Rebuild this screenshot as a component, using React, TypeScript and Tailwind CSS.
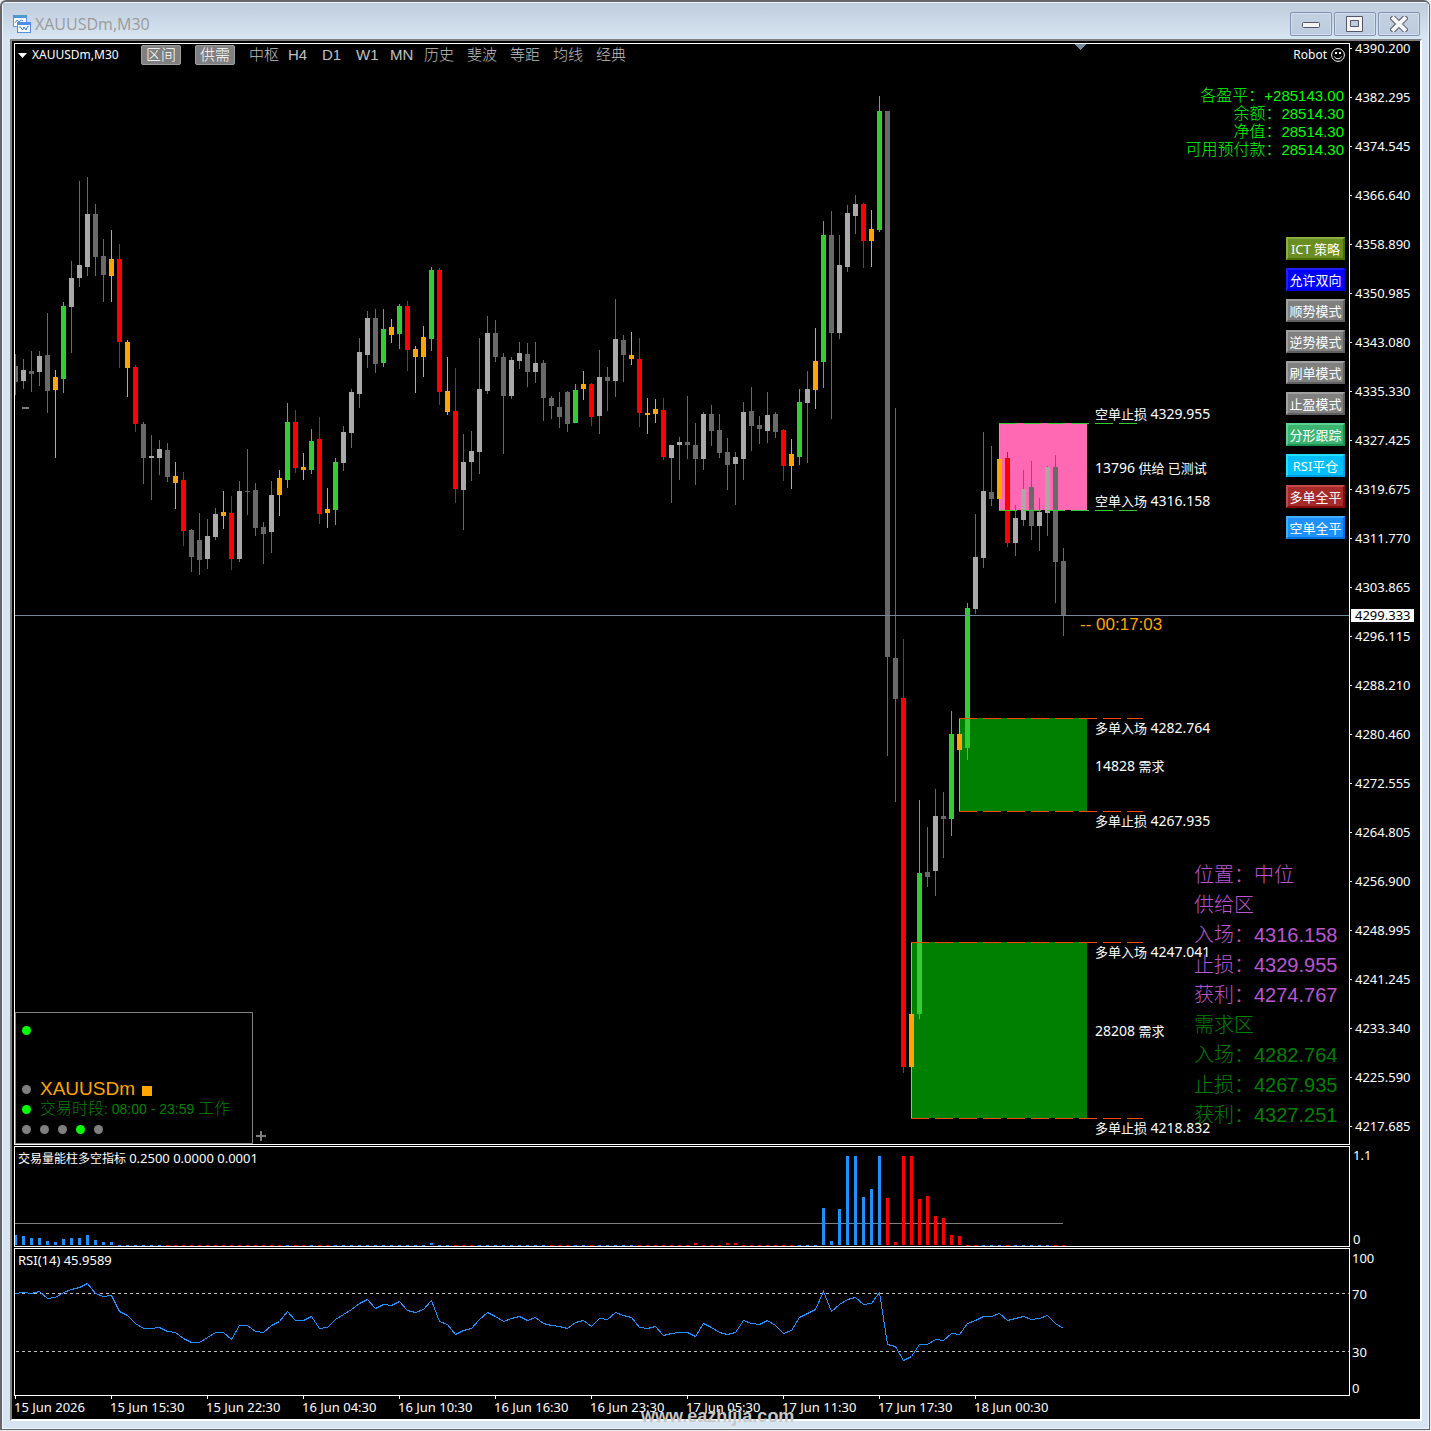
import React from 'react';
import { clsx } from 'clsx';

type Kind = 'up' | 'down' | 'bull' | 'bear' | 'turn';
// kind, high, body top, body bottom, low
type Candle = [Kind, number, number, number, number];

const COLORS: Record<Kind, string> = {
  up: '#a9a9a9',
  down: '#696969',
  bull: '#32cd32',
  bear: '#ff0000',
  turn: '#ffa500',
};

const BLUE = '#1e90ff';
const STEP = 8;
const LEFT = 15;
const barX = (i: number) => LEFT + i * STEP;

const candles: Candle[] = [
  ['down', 354, 366, 382, 395], ['up', 359, 370, 381, 389], ['down', 351, 371, 374, 392], ['up', 351, 356, 372, 386],
  ['down', 313, 355, 391, 413], ['turn', 370, 377, 390, 458], ['bull', 302, 306, 379, 393], ['up', 261, 278, 307, 353],
  ['up', 181, 265, 278, 287], ['up', 177, 214, 267, 276], ['down', 204, 214, 257, 276], ['down', 239, 256, 275, 302],
  ['turn', 230, 259, 276, 302], ['bear', 244, 259, 342, 368], ['turn', 340, 342, 368, 397], ['bear', 365, 367, 424, 432],
  ['down', 422, 424, 458, 484], ['up', 435, 456, 458, 500], ['up', 440, 449, 458, 475], ['down', 443, 450, 477, 482],
  ['turn', 462, 476, 483, 509], ['bear', 472, 480, 531, 546], ['down', 529, 530, 557, 572], ['down', 513, 540, 560, 575],
  ['up', 519, 536, 559, 569], ['up', 508, 514, 537, 540], ['turn', 491, 512, 516, 529], ['bear', 496, 513, 559, 570],
  ['up', 481, 491, 559, 562], ['down', 449, 491, 492, 515], ['down', 483, 490, 528, 536], ['down', 522, 527, 534, 564],
  ['up', 481, 495, 532, 553], ['turn', 470, 478, 495, 516], ['bull', 403, 422, 480, 488], ['bear', 410, 422, 468, 473],
  ['turn', 453, 467, 470, 480], ['bull', 429, 441, 470, 474], ['bear', 417, 439, 514, 524], ['turn', 488, 509, 513, 528],
  ['bull', 458, 462, 510, 525], ['up', 426, 432, 463, 471], ['up', 389, 392, 433, 448], ['up', 338, 352, 394, 408],
  ['up', 311, 318, 355, 368], ['down', 309, 318, 364, 373], ['bull', 309, 329, 363, 367], ['turn', 319, 327, 335, 343],
  ['bull', 304, 306, 334, 349], ['bear', 301, 306, 350, 371], ['turn', 346, 349, 357, 393], ['turn', 326, 337, 357, 377],
  ['bull', 267, 270, 339, 351], ['bear', 268, 270, 392, 405], ['turn', 357, 391, 412, 415], ['bear', 368, 411, 489, 503],
  ['up', 434, 462, 490, 530], ['up', 431, 451, 462, 481], ['up', 338, 389, 452, 474], ['up', 316, 333, 391, 394],
  ['down', 320, 333, 357, 362], ['down', 353, 357, 396, 454], ['up', 357, 360, 396, 399], ['up', 342, 353, 361, 369],
  ['down', 343, 354, 372, 387], ['up', 342, 363, 372, 383], ['down', 360, 363, 398, 421], ['down', 396, 398, 406, 419],
  ['down', 392, 407, 417, 428], ['down', 391, 392, 424, 432], ['bull', 384, 390, 423, 423], ['turn', 371, 384, 389, 400],
  ['bear', 383, 384, 417, 426], ['up', 350, 377, 416, 434], ['down', 367, 377, 381, 411], ['up', 299, 339, 381, 397],
  ['down', 335, 340, 355, 382], ['turn', 332, 355, 359, 365], ['bear', 338, 359, 413, 427], ['turn', 398, 413, 415, 434],
  ['turn', 399, 409, 414, 423], ['bear', 398, 410, 457, 460], ['up', 445, 445, 458, 503], ['up', 437, 442, 445, 480],
  ['down', 396, 442, 445, 459], ['down', 423, 445, 459, 485], ['up', 412, 414, 459, 470], ['down', 405, 414, 431, 446],
  ['down', 414, 430, 453, 458], ['down', 438, 452, 465, 490], ['up', 452, 457, 464, 505], ['up', 402, 412, 459, 480],
  ['down', 387, 411, 426, 451], ['down', 416, 425, 429, 444], ['up', 392, 415, 431, 443], ['down', 412, 414, 432, 438],
  ['bear', 429, 430, 466, 481], ['turn', 439, 454, 466, 489], ['bull', 389, 402, 457, 465], ['up', 371, 389, 403, 463],
  ['turn', 328, 361, 390, 409], ['bull', 221, 235, 362, 388], ['down', 211, 235, 333, 419], ['up', 235, 265, 333, 339],
  ['up', 205, 213, 267, 272], ['up', 195, 204, 216, 234], ['bear', 203, 204, 241, 268], ['turn', 210, 229, 241, 267],
  ['bull', 96, 111, 230, 232], ['down', 111, 111, 657, 756], ['down', 408, 658, 699, 802], ['bear', 639, 698, 1067, 1073],
  ['turn', 942, 1014, 1067, 1118], ['bull', 800, 873, 1014, 1019], ['down', 827, 872, 877, 887], ['up', 789, 816, 871, 896],
  ['down', 792, 816, 819, 858], ['bull', 711, 734, 819, 836], ['turn', 718, 734, 750, 811], ['bull', 603, 608, 748, 760],
  ['up', 514, 557, 609, 614], ['up', 432, 491, 558, 568], ['down', 446, 492, 499, 506], ['turn', 423, 459, 499, 510],
  ['bear', 452, 458, 543, 547], ['up', 505, 518, 543, 556], ['up', 470, 489, 520, 526], ['down', 461, 487, 526, 540],
  ['up', 498, 512, 526, 551], ['up', 466, 467, 513, 536], ['down', 455, 467, 562, 603], ['down', 548, 561, 616, 636],
];

const rsi = [
  1293, 1292, 1293, 1291, 1298, 1297, 1292, 1289, 1287, 1283, 1293, 1296, 1295, 1311, 1315, 1323, 1328, 1328, 1327, 1331,
  1332, 1338, 1342, 1342, 1337, 1332, 1332, 1339, 1325, 1325, 1331, 1332, 1325, 1321, 1311, 1320, 1320, 1316, 1328, 1327,
  1319, 1314, 1309, 1303, 1299, 1308, 1304, 1305, 1301, 1310, 1312, 1309, 1300, 1321, 1324, 1334, 1330, 1328, 1319, 1312,
  1316, 1321, 1318, 1316, 1320, 1317, 1323, 1325, 1326, 1328, 1322, 1320, 1326, 1318, 1319, 1312, 1315, 1317, 1327, 1328,
  1326, 1335, 1333, 1332, 1332, 1336, 1323, 1327, 1332, 1334, 1332, 1320, 1323, 1324, 1320, 1325, 1333, 1330, 1317, 1313,
  1309, 1291, 1311, 1304, 1299, 1297, 1304, 1303, 1292, 1344, 1346, 1360, 1356, 1344, 1344, 1339, 1340, 1333, 1334, 1323,
  1320, 1316, 1316, 1313, 1320, 1318, 1316, 1319, 1318, 1315, 1323, 1328,
];

// one letter per bar: b = blue, r = red
const volumeSides =
  'b'.repeat(19) + 'r'.repeat(15) + 'brrbrr' + 'b'.repeat(15) + 'rrr' + 'b'.repeat(9) + 'rrr' + 'bbr' +
  'b'.repeat(5) + 'r'.repeat(20) + 'b'.repeat(11) + 'r'.repeat(12) + 'bbbr' + 'b'.repeat(5) + 'rr';

// heights of the bars that rise above the base line
const volumeHeights: Record<number, number> = {
  0: 10, 1: 9, 2: 7, 3: 7, 4: 4, 5: 3, 6: 6, 7: 7, 8: 7, 9: 10, 10: 5, 11: 3, 12: 3, 52: 2,
  85: 2, 89: 2, 90: 2, 101: 37, 102: 4, 103: 36, 104: 89, 105: 89, 106: 48, 107: 56, 108: 89,
  109: 47, 110: 3, 111: 89, 112: 89, 113: 46, 114: 49, 115: 29, 116: 27, 117: 10, 118: 9,
};

const zones = [
  { x: 999, top: 423, bottom: 510, end: 1137, fill: '#ff69b4', line: '#32cd32' },
  { x: 959, top: 718, bottom: 811, end: 1143, fill: '#008000', line: '#ff4500' },
  { x: 911, top: 942, bottom: 1118, end: 1143, fill: '#008000', line: '#ff4500' },
];

const zoneLabels = [
  { y: 414, text: '空单止损 4329.955' },
  { y: 468, text: '13796 供给 已测试' },
  { y: 501, text: '空单入场 4316.158' },
  { y: 728, text: '多单入场 4282.764' },
  { y: 766, text: '14828 需求' },
  { y: 821, text: '多单止损 4267.935' },
  { y: 952, text: '多单入场 4247.041' },
  { y: 1031, text: '28208 需求' },
  { y: 1128, text: '多单止损 4218.832' },
];

const prices = [
  '4390.200', '4382.295', '4374.545', '4366.640', '4358.890', '4350.985', '4343.080', '4335.330',
  '4327.425', '4319.675', '4311.770', '4303.865', '4296.115', '4288.210', '4280.460', '4272.555',
  '4264.805', '4256.900', '4248.995', '4241.245', '4233.340', '4225.590', '4217.685',
];

const times = [
  '15 Jun 2026', '15 Jun 15:30', '15 Jun 22:30', '16 Jun 04:30', '16 Jun 10:30', '16 Jun 16:30',
  '16 Jun 23:30', '17 Jun 05:30', '17 Jun 11:30', '17 Jun 17:30', '18 Jun 00:30',
];

const tabs = [
  { label: '中枢', width: 'w-[39px]' },
  { label: 'H4', width: 'w-[34px]' },
  { label: 'D1', width: 'w-[34px]' },
  { label: 'W1', width: 'w-[34px]' },
  { label: 'MN', width: 'w-[34px]' },
  { label: '历史', width: 'w-[43px]' },
  { label: '斐波', width: 'w-[43px]' },
  { label: '等距', width: 'w-[43px]' },
  { label: '均线', width: 'w-[43px]' },
  { label: '经典', width: 'w-[43px]' },
];

const account = [
  ['各盈平：', '+285143.00'],
  ['余额：', '28514.30'],
  ['净值：', '28514.30'],
  ['可用预付款：', '28514.30'],
];

const grayKey = 'bg-[#808080] border-t-[#a0a0a0] border-l-[#a0a0a0] border-b-[#606060] border-r-[#606060]';
const actions = [
  { label: 'ICT 策略', look: 'bg-[#6b8e23] border-t-[#8bae43] border-l-[#8bae43] border-b-[#4b6e03] border-r-[#4b6e03]' },
  { label: '允许双向', look: 'bg-[#0000ff] border-t-[#2020ff] border-l-[#2020ff] border-b-[#0000df] border-r-[#0000df]' },
  { label: '顺势模式', look: grayKey },
  { label: '逆势模式', look: grayKey },
  { label: '刷单模式', look: grayKey },
  { label: '止盈模式', look: grayKey },
  { label: '分形跟踪', look: 'bg-[#3cb371] border-t-[#5cd391] border-l-[#5cd391] border-b-[#1c9351] border-r-[#1c9351]' },
  { label: 'RSI平仓', look: 'bg-[#00bfff] border-t-[#20dfff] border-l-[#20dfff] border-b-[#009fdf] border-r-[#009fdf]' },
  { label: '多单全平', look: 'bg-[#a52a2a] border-t-[#c54a4a] border-l-[#c54a4a] border-b-[#850a0a] border-r-[#850a0a]' },
  { label: '空单全平', look: 'bg-[#1e90ff] border-t-[#3eb0ff] border-l-[#3eb0ff] border-b-[#0070df] border-r-[#0070df]' },
];

const signals = [
  { name: '位置：', value: '中位', color: 'text-[#ba55d3]' },
  { name: '供给区', value: '', color: 'text-[#ba55d3]' },
  { name: '入场：', value: '4316.158', color: 'text-[#ba55d3]' },
  { name: '止损：', value: '4329.955', color: 'text-[#ba55d3]' },
  { name: '获利：', value: '4274.767', color: 'text-[#ba55d3]' },
  { name: '需求区', value: '', color: 'text-[#008000]' },
  { name: '入场：', value: '4282.764', color: 'text-[#008000]' },
  { name: '止损：', value: '4267.935', color: 'text-[#008000]' },
  { name: '获利：', value: '4327.251', color: 'text-[#008000]' },
];

const arial = "[font-family:'Liberation_Sans','Noto_Sans_CJK_SC',sans-serif]";
const tahoma = "[font-family:'Noto_Sans','Noto_Sans_CJK_SC',sans-serif]";

const ChartIcon = () => (
  <svg width="18" height="18" viewBox="0 0 18 18" aria-hidden="true">
    <rect x="0.5" y="0.5" width="13" height="11" fill="#fff" stroke="#5b97ea" />
    <rect x="0" y="0" width="14" height="3" fill="#4f8fe8" />
    <path d="M3 1h2M7 1h1M11 1h1" stroke="#3ec46d" />
    <path d="M2 8l2-3 2 2 2-2 2 1" fill="none" stroke="#4f8fe8" />
    <rect x="4.5" y="7.5" width="13" height="10" fill="#fff" stroke="#4f8fe8" />
    <rect x="4" y="7" width="14" height="3" fill="#4f8fe8" />
    <path d="M6 12l1.500 0 2 3 1.500-3 2 3 1.500-3.500 1 0" fill="none" stroke="#2f74d8" />
  </svg>
);

const CaptionButton = ({ label, children }: { label: string; children: React.ReactNode }) => (
  <button
    aria-label={label}
    className="flex h-6 w-[42px] items-center justify-center rounded-xs border border-[#8292b0] bg-linear-to-b from-[#c3d1e2] to-[#bccbde] shadow-[inset_0_0_0_1px_#d3dfec]"
  >
    <svg width="18" height="16" viewBox="0 0 18 16" aria-hidden="true">
      {children}
    </svg>
  </button>
);

const TitleBar = () => (
  <header className="flex h-9 items-center justify-between bg-linear-to-b from-[#bfccdb] to-[#d8e5f3] pr-2 pl-[10px]">
    <div className="flex items-center gap-1 pt-1.5">
      <ChartIcon />
      <h1 className="[font-family:'Open_Sans',sans-serif] text-base leading-5 text-[#9b9b9b]">XAUUSDm,M30</h1>
    </div>
    <div className="flex gap-0.5 pt-1.5">
      <CaptionButton label="Minimize">
        <rect x="0.5" y="6.500" width="17" height="5" rx="1" fill="#f4f4f4" stroke="#535666" />
      </CaptionButton>
      <CaptionButton label="Maximize">
        <path
          d="M0.500 0.500h16v15h-16zM4.500 4.500v6h8v-6z"
          fill="#f4f4f4"
          fillRule="evenodd"
          stroke="#535666"
        />
      </CaptionButton>
      <CaptionButton label="Close">
        <path d="M3.500 2.500l11 11M14.500 2.500l-11 11" stroke="#535666" strokeWidth="6" strokeLinecap="square" />
        <path d="M3.500 2.500l11 11M14.500 2.500l-11 11" stroke="#f4f4f4" strokeWidth="4" strokeLinecap="square" />
      </CaptionButton>
    </div>
  </header>
);

const PriceChart = () => (
  <svg className="absolute inset-0 h-full w-full" shapeRendering="crispEdges" aria-label="XAUUSDm M30">
    <g transform="translate(-15 -44)">
      {zones.map((z) => (
        <rect key={z.x} x={z.x} y={z.top} width={1087 - z.x} height={z.bottom - z.top} fill={z.fill} />
      ))}
      {candles.map(([kind, high, top, bottom, low], i) => (
        <g key={i}>
          <rect
            x={barX(i)}
            y={high}
            width={1}
            height={low - high}
            fill={kind === 'up' ? COLORS.down : COLORS[kind]}
          />
          <rect x={barX(i) - 2} y={top} width={5} height={bottom - top} fill={COLORS[kind]} />
        </g>
      ))}
      {zones.map((z) => (
        <path
          key={z.x}
          d={`M${z.x} ${z.top + 0.5}H${z.end}M${z.x} ${z.bottom + 0.5}H${z.end}`}
          stroke={z.line}
          strokeDasharray="18 6"
        />
      ))}
      <rect x={15} y={615} width="100%" height={1} fill="#778899" />
      <rect x={22} y={407} width={7} height={2} fill="#808080" />
      <path d="M1075 44h11l-5.500 6z" fill="#778899" />
    </g>
  </svg>
);

const Toolbar = () => (
  <nav className="flex h-[22px] items-center">
    <svg width="9" height="5" className="ml-[3px]" aria-hidden="true">
      <path d="M0 0h9l-4.500 5z" fill="#fff" />
    </svg>
    <span className={clsx(tahoma, 'ml-[5px] w-[109px] text-xs text-white')}>XAUUSDm,M30</span>
    <div className={clsx(arial, 'flex items-center text-[15px] leading-[18px] font-light text-[#c0c0c0]')}>
      {['区间', '供需'].map((name) => (
        <button
          key={name}
          aria-pressed="true"
          className="mr-[14px] h-5 w-10 rounded-xs border border-[#a0a0a0] bg-[#808080] text-white"
        >
          {name}
        </button>
      ))}
      {tabs.map((tab) => (
        <button key={tab.label} className={clsx('text-left', tab.width)}>
          {tab.label}
        </button>
      ))}
    </div>
  </nav>
);

const Dot = ({ on }: { on?: boolean }) => (
  <span className={clsx('size-[9px] shrink-0 rounded-full', on ? 'bg-[#00ff00]' : 'bg-[#808080]')} />
);

const StatusBox = () => (
  <div className="flex items-end gap-[3px]">
    <div className={clsx(arial, 'flex h-[132px] w-[238px] flex-col border border-[#808080] pl-1.5')}>
      <div className="flex h-[66px] pt-[13px]">
        <Dot on />
      </div>
      <div className="flex h-5 items-center gap-[9px] text-[19px] text-[#ffa500]">
        <Dot />
        <span className="leading-5">XAUUSDm</span>
        <span className="mt-1 -ml-0.5 size-[10px] bg-[#ffa500]" />
      </div>
      <div className="flex h-5 items-center gap-[9px] text-base font-light text-[#008000]">
        <Dot on />
        <span className="leading-5 whitespace-nowrap">
          交易时段<span className="text-sm">: 08:00 - 23:59 </span>工作
        </span>
      </div>
      <div className="flex h-5 items-center gap-[9px]">
        <Dot />
        <Dot />
        <Dot />
        <Dot on />
        <Dot />
      </div>
    </div>
    <button aria-label="Expand" className="mb-[3px]">
      <svg width="10" height="10" aria-hidden="true">
        <path d="M5 0v10M0 5h10" stroke="#808080" strokeWidth="2" shapeRendering="crispEdges" />
      </svg>
    </button>
  </div>
);

const SidePanel = () => (
  <aside className={clsx(arial, 'flex flex-col items-end pr-1')}>
    <div className={clsx(tahoma, 'flex h-[22px] items-center gap-1 text-xs text-white')}>
      Robot
      <svg width="14" height="14" viewBox="0 0 14 14" fill="none" stroke="#fff" aria-hidden="true">
        <circle cx="7" cy="7" r="6.400" />
        <path d="M3.500 8.500c1 3 6 3 7 0" />
        <path d="M4 5h2M8 5h2" strokeWidth="2" />
      </svg>
    </div>
    <dl className="mt-[21px] pr-px text-[#00ff00]">
      {account.map(([name, value]) => (
        <div key={name} className="flex h-[18px] items-center justify-end leading-[18px]">
          <dt className="text-base font-light">{name}</dt>
          <dd className="text-[15px]">{value}</dd>
        </div>
      ))}
    </dl>
    <div className="mt-[78px] flex flex-col gap-2">
      {actions.map((a) => (
        <button
          key={a.label}
          className={clsx(tahoma, 'h-[23px] w-[59px] border-2 text-[13px] leading-[18px] whitespace-nowrap text-white', a.look)}
        >
          <span className="-mx-1">{a.label}</span>
        </button>
      ))}
    </div>
    <dl className="mt-[321px] w-[151px] text-xl">
      {signals.map((s, i) => (
        <div key={i} className={clsx('flex h-[30px] items-center leading-[30px]', s.color)}>
          <dt className="font-light">{s.name}</dt>
          {s.value && <dd className={clsx(s.value === '中位' && 'font-light')}>{s.value}</dd>}
        </div>
      ))}
    </dl>
  </aside>
);

// digits are set one size larger than the names beside them
const ZoneLabel = ({ y, text }: { y: number; text: string }) => (
  <span
    className={clsx(tahoma, 'absolute left-[1080px] text-[13px] leading-[18px] whitespace-nowrap text-white')}
    style={{ top: y - 53 }}
  >
    {text.split(/([\d.]+)/).map((part, i) =>
      i % 2 ? (
        <span key={i} className="text-sm leading-[18px]">
          {part}
        </span>
      ) : (
        part
      ),
    )}
  </span>
);

const PriceAxis = () => (
  <div className={clsx(tahoma, 'relative flex w-[70px] shrink-0 flex-col gap-[39px] text-[13px] text-white')}>
    {prices.map((p) => (
      <div key={p} className="flex h-[10px] items-center gap-[3px] leading-[10px]">
        <span className="h-px w-0.5 bg-white" />
        {p}
      </div>
    ))}
    <div className="absolute top-[566px] left-px h-[13px] w-[63px] bg-white pl-1 leading-[13px] text-black">4299.333</div>
  </div>
);

const VolumePanel = () => (
  <section className="flex h-[101px]">
    <div className="relative flex-1 overflow-hidden border border-white">
      <svg className="absolute inset-0 h-full w-full" shapeRendering="crispEdges" aria-hidden="true">
        <g transform="translate(-15 -1147)">
          <rect x={15} y={1223} width={1048} height={1} fill="#808080" />
          {volumeSides.split('').map((side, i) => {
            const h = volumeHeights[i] ?? 1;
            const base = h > 1 ? 1245 : 1246;
            return (
              <rect
                key={i}
                x={barX(i) - 1}
                y={base - h}
                width={3}
                height={h}
                fill={side === 'b' ? BLUE : COLORS.bear}
              />
            );
          })}
        </g>
      </svg>
      <p className={clsx(tahoma, 'relative pl-[3px] text-xs leading-[22px] text-white')}>
        交易量能柱多空指标 <span className="text-[13px] leading-[22px]">0.2500 0.0000 0.0001</span>
      </p>
    </div>
    <div className={clsx(tahoma, 'flex w-[70px] flex-col justify-between pt-px pl-[3px] text-[13px] leading-4 text-white')}>
      <span>1.1</span>
      <span>0</span>
    </div>
  </section>
);

const RsiPanel = () => (
  <section className="flex h-[148px]">
    <div className="relative flex-1 overflow-hidden border border-white">
      <svg className="absolute inset-0 h-full w-full" shapeRendering="crispEdges" aria-hidden="true">
        <g transform="translate(-15 -1249)">
          {[1293, 1351].map((y) => (
            <line key={y} x1={16} x2="200%" y1={y + 0.5} y2={y + 0.5} stroke="#c0c0c0" strokeDasharray="3 3" />
          ))}
          <polyline
            points={rsi.map((y, i) => `${barX(i) + 0.5},${y + 0.5}`).join(' ')}
            fill="none"
            stroke={BLUE}
          />
        </g>
      </svg>
      <p className={clsx(tahoma, 'relative pl-[3px] text-[13px] leading-[22px] text-white')}>RSI(14) 45.9589</p>
    </div>
    <div className={clsx(tahoma, 'flex w-[70px] flex-col pt-px pl-0.5 text-[13px] leading-[18px] text-white')}>
      <span>100</span>
      <span className="mt-[18px]">70</span>
      <span className="mt-10">30</span>
      <span className="mt-[18px]">0</span>
    </div>
  </section>
);

const TimeAxis = () => (
  <div className={clsx(tahoma, 'relative flex h-[23px] text-[13px] text-white')}>
    {times.map((t) => (
      <div key={t} className="w-24 shrink-0 whitespace-nowrap">
        <span className="ml-px block h-[3px] w-px bg-white" />
        <span className="block leading-4">{t}</span>
      </div>
    ))}
    <a
      href="#site"
      className="absolute top-2 left-[627px] [font-family:'Liberation_Sans_Narrow','Liberation_Sans',sans-serif] text-lg leading-6 font-bold text-[#c8c8c8]"
    >
      www.eazhijia.com
    </a>
  </div>
);

export default function App() {
  return (
    <div className="min-h-screen min-w-[1240px] bg-[#ececec] pr-px pb-px">
      <div className="rounded-t-md border-t-2 border-r border-b border-l-2 border-[#64666a] bg-[#d7e4f2]">
        <div className="rounded-t-sm border border-[#edf4fb]">
          <TitleBar />
          <main className="mr-[6px] mb-[7px] ml-[7px] border-2 border-t-[#808080] border-r-white border-b-white border-l-[#808080] bg-black pt-0.5 pl-0.5">
            <section className="flex h-[1102px]">
              <div className="relative flex flex-1 justify-between overflow-hidden border border-white">
                <PriceChart />
                <div className="relative flex flex-col justify-between">
                  <Toolbar />
                  <StatusBox />
                </div>
                <SidePanel />
                {zoneLabels.map((l) => (
                  <ZoneLabel key={l.y} y={l.y} text={l.text} />
                ))}
                <time className={clsx(arial, 'absolute top-[571px] left-[1065px] text-[17px] leading-5 text-[#ffa500]')}>
                  -- 00:17:03
                </time>
              </div>
              <PriceAxis />
            </section>
            <div className="mt-px">
              <VolumePanel />
            </div>
            <div className="mt-px">
              <RsiPanel />
            </div>
            <TimeAxis />
          </main>
        </div>
      </div>
    </div>
  );
}
